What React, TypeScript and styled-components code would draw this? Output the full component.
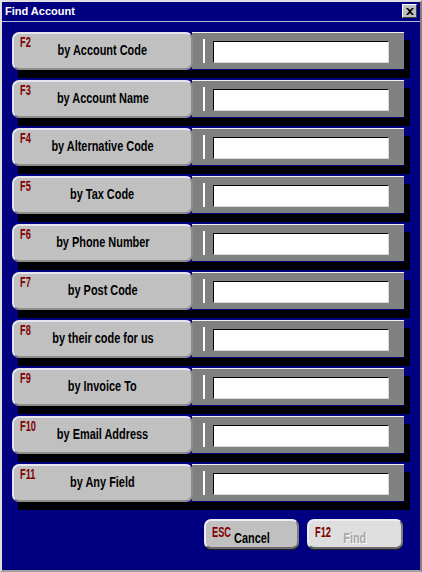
import React from 'react';
import styled, { createGlobalStyle } from 'styled-components';

const GlobalStyle = createGlobalStyle`
  html, body {
    margin: 0;
    padding: 0;
    background: #000080;
  }
  * {
    box-sizing: border-box;
  }
`;

const searches = [
  { key: 'F2', label: 'by Account Code' },
  { key: 'F3', label: 'by Account Name' },
  { key: 'F4', label: 'by Alternative Code' },
  { key: 'F5', label: 'by Tax Code' },
  { key: 'F6', label: 'by Phone Number' },
  { key: 'F7', label: 'by Post Code' },
  { key: 'F8', label: 'by their code for us' },
  { key: 'F9', label: 'by Invoice To' },
  { key: 'F10', label: 'by Email Address' },
  { key: 'F11', label: 'by Any Field' },
];

export default function App(): JSX.Element {
  return (
    <>
      <GlobalStyle />
      <Frame>
        <TitleBar>
          <Title>Find Account</Title>
          <CloseButton aria-label="Close">
            <svg width="8" height="7" viewBox="0 0 8 7">
              <path d="M0 0h2l2 2 2-2h2L5 3.5 8 7H6L4 5 2 7H0l3-3.5z" fill="#000" />
            </svg>
          </CloseButton>
        </TitleBar>
        <Body>
          {searches.map((s) => (
            <Row key={s.key}>
              <SearchButton>
                <KeyTag>{s.key}</KeyTag>
                <Label>{s.label}</Label>
              </SearchButton>
              <FieldPanel>
                <Divider />
                <Input />
              </FieldPanel>
            </Row>
          ))}
          <Footer>
            <ActionButton>
              <KeyTag $top={4}>ESC</KeyTag>
              <ActionLabel>Cancel</ActionLabel>
            </ActionButton>
            <ActionButton $disabled $width={96}>
              <KeyTag $top={4}>F12</KeyTag>
              <ActionLabel $disabled>Find</ActionLabel>
            </ActionButton>
          </Footer>
        </Body>
      </Frame>
    </>
  );
}

const Frame = styled.div`
  width: 422px;
  height: 572px;
  background: #000080;
  border: 2px solid;
  border-color: #e0e0e0 #808080 #a0a0a0 #e0e0e0;
  display: flex;
  flex-direction: column;
  overflow: hidden;
`;

const TitleBar = styled.div`
  height: 20px;
  display: flex;
  align-items: center;
  justify-content: space-between;
  padding: 0 3px 1px 3px;
  border-bottom: 1px solid #b8b8d8;
  background: #000080;
`;

const Title = styled.span`
  color: #fff;
  font: bold 11px 'Liberation Sans', Arial, sans-serif;
`;

const CloseButton = styled.div`
  width: 15px;
  height: 14px;
  background: #c0c0c0;
  border: 1px solid;
  border-color: #fff #404040 #404040 #fff;
  display: flex;
  align-items: center;
  justify-content: center;
`;

const Body = styled.div`
  padding: 10px 10px 0 10px;
  display: flex;
  flex-direction: column;
  gap: 10px;
`;

const Row = styled.div`
  display: flex;
  width: 392px;
  height: 38px;
  box-shadow: 6px 8px 0 #000;
`;

const SearchButton = styled.div`
  position: relative;
  width: 181px;
  height: 38px;
  flex: none;
  background: #c0c0c0;
  border: 2px solid;
  border-color: #e4e4ec #8c8c8c #8c8c8c #e4e4ec;
  border-radius: 7px;
  display: flex;
  align-items: center;
  justify-content: center;
  z-index: 1;
`;

const KeyTag = styled.span<{ $top?: number }>`
  position: absolute;
  left: 6px;
  top: ${(p) => p.$top ?? 1}px;
  color: #800000;
  font: bold 14px 'Liberation Sans', sans-serif;
  line-height: 14px;
  transform: scaleX(0.66);
  transform-origin: left top;
`;

const Label = styled.span`
  display: inline-block;
  color: #000;
  font: bold 14px 'Liberation Sans', sans-serif;
  transform: scaleX(0.78);
  white-space: nowrap;
  margin-top: -2px;
`;

const FieldPanel = styled.div`
  flex: 1;
  height: 37px;
  margin-left: -1px;
  background: #808080;
  border-top: 1px solid #f0f0f0;
  display: flex;
  align-items: center;
  padding-left: 11px;
  gap: 8px;
`;

const Divider = styled.div`
  width: 2px;
  height: 24px;
  background: #fff;
`;

const Input = styled.div`
  width: 176px;
  height: 22px;
  background: #fff;
  border: 1px solid;
  border-color: #000 #d8d8d8 #d8d8d8 #000;
  margin-top: 2px;
`;

const Footer = styled.div`
  display: flex;
  justify-content: flex-end;
  gap: 8px;
  margin-top: 7px;
  padding-right: 7px;
`;

const ActionButton = styled.div<{ $disabled?: boolean; $width?: number }>`
  position: relative;
  width: ${(p) => p.$width ?? 95}px;
  height: 30px;
  background: ${(p) => (p.$disabled ? '#dedede' : '#c0c0c0')};
  border: 2px solid;
  border-color: #ececf4 #7c7c7c #6a6a6a #ececf4;
  border-radius: 7px;
  box-shadow: 0 1px 0 #202020;
  display: flex;
  align-items: center;
  justify-content: center;
`;

const ActionLabel = styled.span<{ $disabled?: boolean }>`
  display: inline-block;
  margin-top: 7px;
  color: ${(p) => (p.$disabled ? '#a8a8a8' : '#000')};
  text-shadow: ${(p) => (p.$disabled ? '1px 1px 0 #f8f8f8' : 'none')};
  font: bold 14px 'Liberation Sans', sans-serif;
  transform: scaleX(0.78);
`;
